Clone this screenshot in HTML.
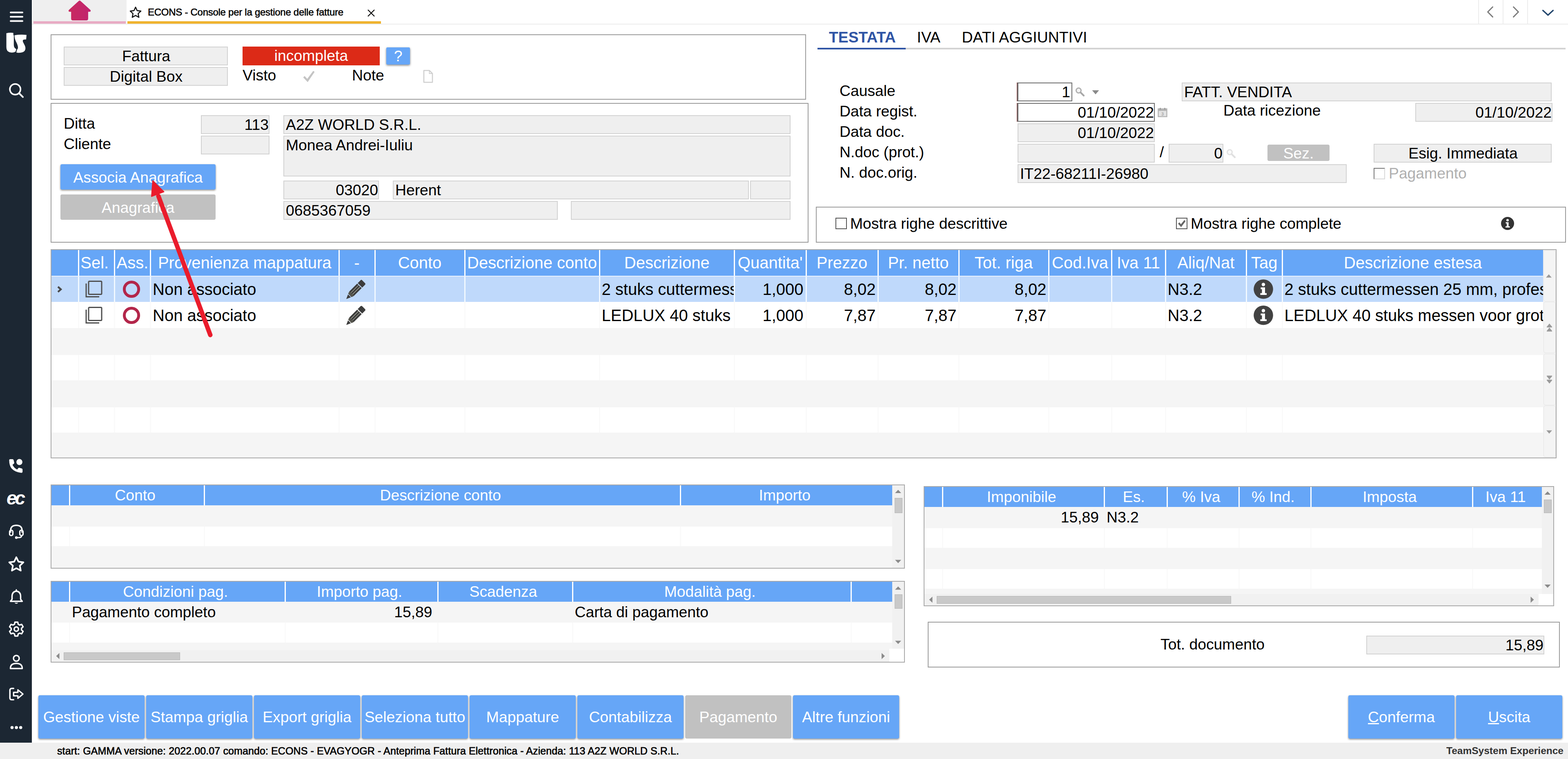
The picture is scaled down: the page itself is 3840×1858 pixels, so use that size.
<!DOCTYPE html>
<html lang="it"><head><meta charset="utf-8"><title>ECONS - Console per la gestione delle fatture</title>
<style>
*{box-sizing:border-box;margin:0;padding:0}
html,body{width:3840px;height:1858px;overflow:hidden;background:#fff}
body{font-family:"Liberation Sans",sans-serif;font-size:37.3px;color:#000;position:relative}
.a{position:absolute}
.t{position:absolute;white-space:nowrap;line-height:1}
.f{position:absolute;background:#efefef;border:2px solid #d2d2d2;white-space:nowrap;overflow:hidden;line-height:43px;height:45px;padding:0 4px}
.r{text-align:right;padding-right:0}.c{text-align:center;padding:0 3px 0 5px}
.p{position:absolute;border:2px solid #9b9b9b;background:#fff}
.b{position:absolute;background:#66a6f7;color:#fff;text-align:center;white-space:nowrap;box-shadow:0 2px 4px rgba(0,0,0,.45);border-radius:3px}
.g{position:absolute;background:#fff;overflow:hidden}
.gh{position:absolute;background:#66a6f7;color:#fff;text-align:center;white-space:nowrap;overflow:hidden}
.gc{position:absolute;white-space:nowrap;overflow:hidden}
.sb{position:absolute;background:#f1f1f1}
svg{position:absolute;overflow:visible}
</style></head>
<body>
<div class="a" style="left:78px;top:0px;width:3762px;height:60px;background:#fff;border-bottom:2px solid #ececec"></div>
<div class="a" style="left:80px;top:0px;width:230px;height:59px;background:#efefef"></div>
<div class="a" style="left:82px;top:52px;width:226px;height:6px;background:#e8abc4"></div>
<svg style="left:166px;top:0px" width="58" height="52" viewBox="0 0 58 52"><defs><linearGradient id="hg" x1="0" y1="0" x2="1" y2="0"><stop offset="0" stop-color="#c92a5f"/><stop offset="1" stop-color="#c0256f"/></linearGradient></defs><path d="M29 1.6 Q30.3 1.6 31.3 2.6 L55 24 Q57 26 55.8 27.8 Q55 28.8 53.5 28.8 L49.9 28.8 L49.9 45.5 Q49.9 50.1 45.3 50.1 L12.8 50.1 Q8.2 50.1 8.2 45.5 L8.2 28.8 L4.5 28.8 Q3 28.8 2.2 27.8 Q1 26 3 24 L26.7 2.6 Q27.7 1.6 29 1.6 Z" fill="url(#hg)"/></svg>
<div class="a" style="left:312px;top:52px;width:621px;height:6px;background:#efb32f"></div>
<svg style="left:316px;top:15px" width="32" height="30" viewBox="0 0 32 30"><path d="M16 2.6 L19.9 11 L29 12.1 L22.3 18.4 L24.1 27.4 L16 22.9 L7.9 27.4 L9.7 18.4 L3 12.1 L12.1 11 Z" fill="none" stroke="#111" stroke-width="2.6" stroke-linejoin="round"/></svg>
<div class="t" style="left:362px;top:18px;font-size:24px;letter-spacing:-0.27px;-webkit-text-stroke:0.6px #000">ECONS - Console per la gestione delle fatture</div>
<svg style="left:899px;top:23px" width="20" height="18" viewBox="0 0 20 18"><path d="M2 1 L18 17 M18 1 L2 17" stroke="#111" stroke-width="2.4" fill="none"/></svg>
<div class="a" style="left:3620px;top:0px;width:2px;height:58px;background:#ececec"></div>
<div class="a" style="left:3680px;top:0px;width:2px;height:58px;background:#ececec"></div>
<div class="a" style="left:3740px;top:0px;width:2px;height:58px;background:#ececec"></div>
<svg style="left:3636px;top:14px" width="24" height="32" viewBox="0 0 24 32"><path d="M19.5 3 L7.5 15.2 L19.5 27.4" stroke="#7d7d7d" stroke-width="3" stroke-linecap="round" stroke-linejoin="round" fill="none"/></svg>
<svg style="left:3700px;top:14px" width="24" height="32" viewBox="0 0 24 32"><path d="M6.5 3 L18.5 15.2 L6.5 27.4" stroke="#7d7d7d" stroke-width="3" stroke-linecap="round" stroke-linejoin="round" fill="none"/></svg>
<svg style="left:3775px;top:20.5px" width="32" height="20" viewBox="0 0 32 20"><path d="M3.5 4.5 L16 16 L28.5 4.5" stroke="#21456c" stroke-width="3.2" stroke-linecap="round" stroke-linejoin="round" fill="none"/></svg>
<div class="a" style="left:0px;top:1818px;width:3840px;height:40px;background:#efefef"></div>
<div class="t" style="left:140px;top:1826px;font-size:25px;letter-spacing:0.1px;-webkit-text-stroke:0.7px #000">start: GAMMA versione: 2022.00.07 comando: ECONS - EVAGYOGR - Anteprima Fattura Elettronica - Azienda: 113 A2Z WORLD S.R.L.</div>
<div class="t" style="right:11px;top:1826px;font-size:24.5px;font-weight:bold;color:#333">TeamSystem Experience</div>
<div class="a" style="left:0px;top:0px;width:78px;height:1818px;background:#1c2733"></div>
<svg style="left:24px;top:27px" width="33" height="28" viewBox="0 0 33 28"><path d="M2 3.5 H31 M2 14 H31 M2 24.5 H31" stroke="#fff" stroke-width="4" stroke-linecap="round"/></svg>
<svg style="left:14px;top:79px" width="52" height="52" viewBox="0 0 52 52"><path d="M1.6 2.2 Q10 0.4 18.6 1.4 L18.8 7.2 L19.9 7.4 L19.8 30 Q19.6 38.5 25.8 41.2 L24 47.4 Q17.5 51.2 9.6 49 Q1.6 46.4 1.6 36.5 Z" fill="#fff"/><path d="M21.6 7.2 Q36 4.8 51 6.4 L50 17.6 L45.6 17.8 Q40.6 18.2 42.2 23.4 L47 33 Q51 44 42.4 48.6 Q34.6 51.6 26 49.4 L27.6 42.6 Q30.2 40.4 30 36.2 Q29.2 30 25 22.4 Q21.4 14.6 21.6 7.2 Z" fill="#fff"/></svg>
<svg style="left:20px;top:202px" width="42" height="42" viewBox="0 0 42 42"><circle cx="17.2" cy="16.6" r="13" fill="none" stroke="#fff" stroke-width="3.8"/><path d="M26.5 26 L36 35.5" stroke="#fff" stroke-width="4" stroke-linecap="round"/></svg>
<svg style="left:20px;top:1121px" width="40" height="40" viewBox="0 0 40 40"><path d="M2.5 5.5 Q2.5 3 5 3 L10.5 3 Q12.8 3 13.3 5.2 L14.8 11.5 Q15.2 13.2 13.8 14.3 L10.6 16.8 Q14 24.5 22 28.4 L24.8 25 Q25.9 23.7 27.5 24.2 L33.2 25.8 Q35.2 26.4 35.2 28.5 L35.2 33.5 Q35.2 36.4 32.2 36.4 Q17.5 35.4 8.5 26 Q2.5 18.5 2.5 5.5 Z" fill="#fff"/><circle cx="27.5" cy="10" r="7.4" fill="#fff"/></svg>
<div class="t" style="left:16px;top:1196px;font-size:46px;font-weight:bold;font-style:italic;color:#fff;letter-spacing:-5px;font-family:'Liberation Sans',sans-serif">ec</div>
<svg style="left:20px;top:1282px" width="40" height="40" viewBox="0 0 40 40"><path d="M6 22 V17 Q6 4 20 4 Q34 4 34 17 V22" fill="none" stroke="#fff" stroke-width="3.4"/><rect x="3.5" y="16" width="8" height="13" rx="3.5" fill="none" stroke="#fff" stroke-width="3.2"/><rect x="28.5" y="16" width="8" height="13" rx="3.5" fill="none" stroke="#fff" stroke-width="3.2"/><path d="M33 29 Q33 34 26 34 H22" fill="none" stroke="#fff" stroke-width="3.2"/><circle cx="20" cy="34" r="3.2" fill="#fff"/></svg>
<svg style="left:19px;top:1360px" width="42" height="42" viewBox="0 0 42 42"><path d="M21 4 L26.3 15 L38.3 16.5 L29.5 24.9 L31.8 36.8 L21 31 L10.2 36.8 L12.5 24.9 L3.7 16.5 L15.7 15 Z" fill="none" stroke="#fff" stroke-width="4" stroke-linejoin="round"/></svg>
<svg style="left:21px;top:1441px" width="38" height="40" viewBox="0 0 38 40"><path d="M19 3 V6 M19 6 Q8.5 7.5 8.5 19 V26 L4.5 31 H33.5 L29.5 26 V19 Q29.5 7.5 19 6 Z" fill="none" stroke="#fff" stroke-width="3.4" stroke-linejoin="round" stroke-linecap="round"/><path d="M14.5 34.5 Q19 39.5 23.5 34.5 Z" fill="#fff"/></svg>
<svg style="left:19px;top:1519px" width="42" height="42" viewBox="0 0 42 42"><path d="M17.5 3 H24.5 L25.6 8.2 L29 10.1 L34 8.4 L37.5 14.4 L33.6 18 V22 L37.5 25.6 L34 31.6 L29 29.9 L25.6 31.8 L24.5 37 H17.5 L16.4 31.8 L13 29.9 L8 31.6 L4.5 25.6 L8.4 22 V18 L4.5 14.4 L8 8.4 L13 10.1 L16.4 8.2 Z" transform="translate(0 1)" fill="none" stroke="#fff" stroke-width="3.4" stroke-linejoin="round"/><circle cx="21" cy="21" r="5.2" fill="none" stroke="#fff" stroke-width="3.4"/></svg>
<svg style="left:21px;top:1600.5px" width="38" height="40" viewBox="0 0 38 40"><circle cx="19" cy="10.5" r="7" fill="none" stroke="#fff" stroke-width="3.4"/><path d="M4.5 35.5 Q4.5 23 19 23 Q33.5 23 33.5 35.5 Z" fill="none" stroke="#fff" stroke-width="3.4" stroke-linejoin="round"/></svg>
<svg style="left:20px;top:1681px" width="40" height="36.2" viewBox="0 0 42 38"><path d="M14 4.5 H9 Q4.5 4.5 4.5 9 V29 Q4.5 33.5 9 33.5 H14" fill="none" stroke="#fff" stroke-width="3.6" stroke-linecap="round"/><path d="M14 14.5 H25 V8 L38 19 L25 30 V23.5 H14 Z" fill="none" stroke="#fff" stroke-width="3.4" stroke-linejoin="round"/></svg>
<svg style="left:24px;top:1774.5px" width="34" height="12" viewBox="0 0 34 12"><circle cx="5.5" cy="6" r="3.8" fill="#fff"/><circle cx="16.1" cy="6" r="3.8" fill="#fff"/><circle cx="26.7" cy="6" r="3.8" fill="#fff"/></svg>
<div class="p" style="left:124px;top:84px;width:1850px;height:160px;"></div>
<div class="f c" style="left:156px;top:114px;width:402px;height:46px;">Fattura</div>
<div class="f c" style="left:156px;top:164px;width:402px;height:46px;">Digital Box</div>
<div class="a" style="left:594px;top:114px;width:336px;height:46px;background:#dc2a17;color:#fff;text-align:center;line-height:44px;white-space:nowrap">incompleta</div>
<div class="b" style="left:946px;top:116px;width:58px;height:42px;line-height:43px;font-size:37.3px;box-shadow:0 2px 5px rgba(0,0,0,.5)">?</div>
<div class="t" style="left:594px;top:166px;font-size:37.3px;">Visto</div>
<div class="t" style="left:862px;top:166px;font-size:37.3px;">Note</div>
<svg style="left:739px;top:170px" width="36" height="34" viewBox="0 0 36 34"><path d="M3.5 19.5 L7 16 L13.5 23 L28 3.5 L31.5 6 L14.5 31 Z" fill="#c4c4c4"/></svg>
<svg style="left:1035px;top:170px" width="28" height="34" viewBox="0 0 28 34"><path d="M3 2.5 H16.5 L24 10 V31.5 H3 Z" fill="#fff" stroke="#cfcfcf" stroke-width="2.6" stroke-linejoin="round"/><path d="M16.5 2.5 V10 H24" fill="none" stroke="#cfcfcf" stroke-width="2"/></svg>
<div class="p" style="left:124px;top:252px;width:1856px;height:342px;"></div>
<div class="t" style="left:156px;top:284px;font-size:37.3px;">Ditta</div>
<div class="t" style="left:156px;top:334px;font-size:37.3px;">Cliente</div>
<div class="f r" style="left:492px;top:282px;width:168px;height:46px;">113</div>
<div class="f " style="left:492px;top:332px;width:168px;height:46px;"></div>
<div class="f " style="left:694px;top:282px;width:1242px;height:46px;">A2Z WORLD S.R.L.</div>
<div class="f " style="left:694px;top:332px;width:1242px;height:100px;">Monea Andrei-Iuliu</div>
<div class="f r" style="left:694px;top:442px;width:234px;height:46px;">03020</div>
<div class="f " style="left:962px;top:442px;width:872px;height:46px;">Herent</div>
<div class="f " style="left:1837px;top:442px;width:99px;height:46px;"></div>
<div class="f " style="left:694px;top:492px;width:672px;height:46px;">0685367059</div>
<div class="f " style="left:1398px;top:492px;width:538px;height:46px;"></div>
<div class="b" style="left:148px;top:402px;width:380px;height:62px;line-height:64px;font-size:37.3px;border-radius:4px">Associa Anagrafica</div>
<div class="b" style="left:148px;top:476px;width:380px;height:62px;line-height:64px;font-size:37.3px;border-radius:4px;background:#c1c1c1;box-shadow:none">Anagrafica</div>
<div class="a" style="left:2218px;top:117px;width:1616px;height:4px;background:#d3d3d3"></div>
<div class="a" style="left:2002px;top:117px;width:216px;height:4px;background:#3055a5"></div>
<div class="t" style="left:2030px;top:73px;font-size:37.3px;font-weight:bold;color:#3055a5">TESTATA</div>
<div class="t" style="left:2245.5px;top:73px;font-size:37.4px;">IVA</div>
<div class="t" style="left:2355.5px;top:73px;font-size:37.4px;">DATI AGGIUNTIVI</div>
<div class="t" style="left:2056px;top:204px;font-size:37.3px;">Causale</div>
<div class="t" style="left:2056px;top:254px;font-size:37.3px;">Data regist.</div>
<div class="t" style="left:2056px;top:304px;font-size:37.3px;">Data doc.</div>
<div class="t" style="left:2056px;top:354px;font-size:37.3px;">N.doc (prot.)</div>
<div class="t" style="left:2056px;top:404px;font-size:37.3px;">N. doc.orig.</div>
<div class="f r" style="left:2491px;top:202px;width:135px;height:46px;background:#fff;border:2px solid #6b6b6b;border-left:3px solid #6b6b6b;box-shadow:-1px 0 0 #a04848;padding-right:3px">1</div>
<div class="f r" style="left:2491px;top:252px;width:337px;height:46px;background:#fff;border:2px solid #6b6b6b;border-left:3px solid #6b6b6b;box-shadow:-1px 0 0 #a04848;padding-right:0">01/10/2022</div>
<div class="f r" style="left:2492px;top:302px;width:336px;height:46px;">01/10/2022</div>
<div class="f " style="left:2492px;top:352px;width:336px;height:46px;"></div>
<div class="f " style="left:2492px;top:402px;width:806px;height:46px;">IT22-68211I-26980</div>
<div class="t" style="left:2840px;top:354px;font-size:37.3px;">/</div>
<div class="f r" style="left:2862px;top:352px;width:134px;height:46px;">0</div>
<div class="f " style="left:2894px;top:202px;width:906px;height:46px;">FATT. VENDITA</div>
<div class="t" style="left:2996px;top:252px;font-size:37.3px;">Data ricezione</div>
<div class="f r" style="left:3466px;top:252px;width:336px;height:46px;padding-right:0">01/10/2022</div>
<div class="b" style="left:3104px;top:354px;width:152px;height:40px;line-height:42px;font-size:37.3px;background:#c1c1c1;box-shadow:none;border-radius:4px">Sez.</div>
<div class="f c" style="left:3364px;top:352px;width:436px;height:46px;">Esig. Immediata</div>
<div class="a" style="left:3364px;top:411px;width:28px;height:28px;background:#fff;border:2px solid;border-color:#767676 #d8d8d8 #d8d8d8 #767676"></div>
<div class="t" style="left:3401px;top:406px;font-size:37.3px;color:#b0b0b0">Pagamento</div>
<svg style="left:2633px;top:213px;opacity:1" width="24" height="24" viewBox="0 0 24 24"><circle cx="8.5" cy="8.5" r="6" fill="#f4f4f4" stroke="#b0b0b0" stroke-width="3"/><path d="M13.5 13.5 L21 21" stroke="#a8a8a8" stroke-width="4.2" stroke-linecap="round"/></svg>
<svg style="left:3003px;top:364px;opacity:0.35" width="24" height="24" viewBox="0 0 24 24"><circle cx="8.5" cy="8.5" r="6" fill="#f4f4f4" stroke="#b0b0b0" stroke-width="3"/><path d="M13.5 13.5 L21 21" stroke="#a8a8a8" stroke-width="4.2" stroke-linecap="round"/></svg>
<svg style="left:2673px;top:219px" width="20" height="14" viewBox="0 0 20 14"><path d="M1.5 2 H18.5 L10 12 Z" fill="#8a8a8a"/></svg>
<svg style="left:2835px;top:263px" width="24" height="24" viewBox="0 0 24 24"><rect x="1.5" y="3.5" width="21" height="19" fill="#e4e4e4" stroke="#b4b4b4" stroke-width="2.4"/><rect x="1.5" y="3.5" width="21" height="5" fill="#b4b4b4"/><rect x="5" y="1" width="3" height="5" fill="#a0a0a0"/><rect x="16" y="1" width="3" height="5" fill="#a0a0a0"/><text x="12" y="20" font-family="Liberation Sans,sans-serif" font-size="11" font-weight="bold" text-anchor="middle" fill="#aaa">3</text></svg>
<div class="p" style="left:1998px;top:506px;width:1837px;height:88px;"></div>
<div class="a" style="left:2046px;top:533px;width:28px;height:28px;background:#fff;border:2px solid #555"></div>
<div class="t" style="left:2082px;top:529px;font-size:37.3px;">Mostra righe descrittive</div>
<div class="a" style="left:2880px;top:533px;width:28px;height:28px;background:#fff;border:2px solid #555"><svg style="left:1px;top:1px" width="22" height="22" viewBox="0 0 22 22"><path d="M2 11.5 L5.5 8.2 L9 13 L17.5 2.5 L20.5 5.5 L9.5 20 Z" fill="#666"/></svg></div>
<div class="t" style="left:2916px;top:529px;font-size:37.3px;">Mostra righe complete</div>
<svg style="left:3675px;top:530px" width="34" height="34" viewBox="0 0 34 34"><circle cx="17" cy="17" r="16" fill="#333"/><circle cx="17" cy="9" r="3" fill="#fff"/><path d="M12.5 14 H19.5 V24 H22.5 V27 H12 V24 H15 V17 H12.5 Z" fill="#fff"/></svg>
<div class="p" style="left:124px;top:610px;width:3688px;height:512px;border-color:#a9a9a9;background:#f5f5f5"></div>
<div class="a" style="left:126px;top:612px;width:3652.5px;height:62.5px;background:#fff"></div>
<div class="gh" style="left:126px;top:612px;width:64.5px;height:62.5px;font-size:40px;line-height:62.5px;"></div>
<div class="gh" style="left:193.5px;top:612px;width:85.5px;height:62.5px;font-size:40px;line-height:62.5px;padding-right:9.0px;">Sel.</div>
<div class="gh" style="left:282.0px;top:612px;width:85.0px;height:62.5px;font-size:40px;line-height:62.5px;">Ass.</div>
<div class="gh" style="left:370.0px;top:612px;width:458.5px;height:62.5px;font-size:40px;line-height:62.5px;">Provenienza mappatura</div>
<div class="gh" style="left:831.5px;top:612px;width:85.0px;height:62.5px;font-size:40px;line-height:62.5px;">-</div>
<div class="gh" style="left:919.5px;top:612px;width:217.0px;height:62.5px;font-size:40px;line-height:62.5px;">Conto</div>
<div class="gh" style="left:1139.5px;top:612px;width:327.0px;height:62.5px;font-size:40px;line-height:62.5px;">Descrizione conto</div>
<div class="gh" style="left:1469.5px;top:612px;width:327.5px;height:62.5px;font-size:40px;line-height:62.5px;">Descrizione</div>
<div class="gh" style="left:1800.0px;top:612px;width:172.5px;height:62.5px;font-size:40px;line-height:62.5px;">Quantita&#x27;</div>
<div class="gh" style="left:1975.5px;top:612px;width:173.0px;height:62.5px;font-size:40px;line-height:62.5px;">Prezzo</div>
<div class="gh" style="left:2151.5px;top:612px;width:195.0px;height:62.5px;font-size:40px;line-height:62.5px;">Pr. netto</div>
<div class="gh" style="left:2349.5px;top:612px;width:217.0px;height:62.5px;font-size:40px;line-height:62.5px;">Tot. riga</div>
<div class="gh" style="left:2569.5px;top:612px;width:151.0px;height:62.5px;font-size:40px;line-height:62.5px;">Cod.Iva</div>
<div class="gh" style="left:2723.5px;top:612px;width:129.0px;height:62.5px;font-size:40px;line-height:62.5px;">Iva 11</div>
<div class="gh" style="left:2855.5px;top:612px;width:195.5px;height:62.5px;font-size:40px;line-height:62.5px;">Aliq/Nat</div>
<div class="gh" style="left:3054.0px;top:612px;width:84.5px;height:62.5px;font-size:40px;line-height:62.5px;">Tag</div>
<div class="gh" style="left:3141.5px;top:612px;width:637.0px;height:62.5px;font-size:40px;line-height:62.5px;">Descrizione estesa</div>
<div class="a" style="left:126px;top:677px;width:3652.5px;height:61.5px;background:#f2f9ff"></div>
<div class="a" style="left:126px;top:677px;width:64.5px;height:61.5px;background:#bfd9fb"></div>
<div class="a" style="left:193.5px;top:677px;width:85.5px;height:61.5px;background:#bfd9fb"></div>
<div class="a" style="left:282.0px;top:677px;width:85.0px;height:61.5px;background:#bfd9fb"></div>
<div class="a" style="left:370.0px;top:677px;width:458.5px;height:61.5px;background:#bfd9fb"></div>
<div class="a" style="left:831.5px;top:677px;width:85.0px;height:61.5px;background:#bfd9fb"></div>
<div class="a" style="left:919.5px;top:677px;width:217.0px;height:61.5px;background:#bfd9fb"></div>
<div class="a" style="left:1139.5px;top:677px;width:327.0px;height:61.5px;background:#bfd9fb"></div>
<div class="a" style="left:1469.5px;top:677px;width:327.5px;height:61.5px;background:#bfd9fb"></div>
<div class="a" style="left:1800.0px;top:677px;width:172.5px;height:61.5px;background:#bfd9fb"></div>
<div class="a" style="left:1975.5px;top:677px;width:173.0px;height:61.5px;background:#bfd9fb"></div>
<div class="a" style="left:2151.5px;top:677px;width:195.0px;height:61.5px;background:#bfd9fb"></div>
<div class="a" style="left:2349.5px;top:677px;width:217.0px;height:61.5px;background:#bfd9fb"></div>
<div class="a" style="left:2569.5px;top:677px;width:151.0px;height:61.5px;background:#bfd9fb"></div>
<div class="a" style="left:2723.5px;top:677px;width:129.0px;height:61.5px;background:#bfd9fb"></div>
<div class="a" style="left:2855.5px;top:677px;width:195.5px;height:61.5px;background:#bfd9fb"></div>
<div class="a" style="left:3054.0px;top:677px;width:84.5px;height:61.5px;background:#bfd9fb"></div>
<div class="a" style="left:3141.5px;top:677px;width:637.0px;height:61.5px;background:#bfd9fb"></div>
<div class="a" style="left:126px;top:739px;width:3652.5px;height:63.5px;background:#fafafa"></div>
<div class="a" style="left:126px;top:739px;width:64.5px;height:63.5px;background:#fff"></div>
<div class="a" style="left:193.5px;top:739px;width:85.5px;height:63.5px;background:#fff"></div>
<div class="a" style="left:282.0px;top:739px;width:85.0px;height:63.5px;background:#fff"></div>
<div class="a" style="left:370.0px;top:739px;width:458.5px;height:63.5px;background:#fff"></div>
<div class="a" style="left:831.5px;top:739px;width:85.0px;height:63.5px;background:#fff"></div>
<div class="a" style="left:919.5px;top:739px;width:217.0px;height:63.5px;background:#fff"></div>
<div class="a" style="left:1139.5px;top:739px;width:327.0px;height:63.5px;background:#fff"></div>
<div class="a" style="left:1469.5px;top:739px;width:327.5px;height:63.5px;background:#fff"></div>
<div class="a" style="left:1800.0px;top:739px;width:172.5px;height:63.5px;background:#fff"></div>
<div class="a" style="left:1975.5px;top:739px;width:173.0px;height:63.5px;background:#fff"></div>
<div class="a" style="left:2151.5px;top:739px;width:195.0px;height:63.5px;background:#fff"></div>
<div class="a" style="left:2349.5px;top:739px;width:217.0px;height:63.5px;background:#fff"></div>
<div class="a" style="left:2569.5px;top:739px;width:151.0px;height:63.5px;background:#fff"></div>
<div class="a" style="left:2723.5px;top:739px;width:129.0px;height:63.5px;background:#fff"></div>
<div class="a" style="left:2855.5px;top:739px;width:195.5px;height:63.5px;background:#fff"></div>
<div class="a" style="left:3054.0px;top:739px;width:84.5px;height:63.5px;background:#fff"></div>
<div class="a" style="left:3141.5px;top:739px;width:637.0px;height:63.5px;background:#fff"></div>
<div class="a" style="left:126px;top:868.5px;width:3652.5px;height:62.0px;background:#fafafa"></div>
<div class="a" style="left:126px;top:868.5px;width:64.5px;height:62.0px;background:#fff"></div>
<div class="a" style="left:193.5px;top:868.5px;width:85.5px;height:62.0px;background:#fff"></div>
<div class="a" style="left:282.0px;top:868.5px;width:85.0px;height:62.0px;background:#fff"></div>
<div class="a" style="left:370.0px;top:868.5px;width:458.5px;height:62.0px;background:#fff"></div>
<div class="a" style="left:831.5px;top:868.5px;width:85.0px;height:62.0px;background:#fff"></div>
<div class="a" style="left:919.5px;top:868.5px;width:217.0px;height:62.0px;background:#fff"></div>
<div class="a" style="left:1139.5px;top:868.5px;width:327.0px;height:62.0px;background:#fff"></div>
<div class="a" style="left:1469.5px;top:868.5px;width:327.5px;height:62.0px;background:#fff"></div>
<div class="a" style="left:1800.0px;top:868.5px;width:172.5px;height:62.0px;background:#fff"></div>
<div class="a" style="left:1975.5px;top:868.5px;width:173.0px;height:62.0px;background:#fff"></div>
<div class="a" style="left:2151.5px;top:868.5px;width:195.0px;height:62.0px;background:#fff"></div>
<div class="a" style="left:2349.5px;top:868.5px;width:217.0px;height:62.0px;background:#fff"></div>
<div class="a" style="left:2569.5px;top:868.5px;width:151.0px;height:62.0px;background:#fff"></div>
<div class="a" style="left:2723.5px;top:868.5px;width:129.0px;height:62.0px;background:#fff"></div>
<div class="a" style="left:2855.5px;top:868.5px;width:195.5px;height:62.0px;background:#fff"></div>
<div class="a" style="left:3054.0px;top:868.5px;width:84.5px;height:62.0px;background:#fff"></div>
<div class="a" style="left:3141.5px;top:868.5px;width:637.0px;height:62.0px;background:#fff"></div>
<div class="a" style="left:126px;top:997px;width:3652.5px;height:61.5px;background:#fafafa"></div>
<div class="a" style="left:126px;top:997px;width:64.5px;height:61.5px;background:#fff"></div>
<div class="a" style="left:193.5px;top:997px;width:85.5px;height:61.5px;background:#fff"></div>
<div class="a" style="left:282.0px;top:997px;width:85.0px;height:61.5px;background:#fff"></div>
<div class="a" style="left:370.0px;top:997px;width:458.5px;height:61.5px;background:#fff"></div>
<div class="a" style="left:831.5px;top:997px;width:85.0px;height:61.5px;background:#fff"></div>
<div class="a" style="left:919.5px;top:997px;width:217.0px;height:61.5px;background:#fff"></div>
<div class="a" style="left:1139.5px;top:997px;width:327.0px;height:61.5px;background:#fff"></div>
<div class="a" style="left:1469.5px;top:997px;width:327.5px;height:61.5px;background:#fff"></div>
<div class="a" style="left:1800.0px;top:997px;width:172.5px;height:61.5px;background:#fff"></div>
<div class="a" style="left:1975.5px;top:997px;width:173.0px;height:61.5px;background:#fff"></div>
<div class="a" style="left:2151.5px;top:997px;width:195.0px;height:61.5px;background:#fff"></div>
<div class="a" style="left:2349.5px;top:997px;width:217.0px;height:61.5px;background:#fff"></div>
<div class="a" style="left:2569.5px;top:997px;width:151.0px;height:61.5px;background:#fff"></div>
<div class="a" style="left:2723.5px;top:997px;width:129.0px;height:61.5px;background:#fff"></div>
<div class="a" style="left:2855.5px;top:997px;width:195.5px;height:61.5px;background:#fff"></div>
<div class="a" style="left:3054.0px;top:997px;width:84.5px;height:61.5px;background:#fff"></div>
<div class="a" style="left:3141.5px;top:997px;width:637.0px;height:61.5px;background:#fff"></div>
<div class="a" style="left:126px;top:674.5px;width:3653px;height:2.5px;background:#eaf2fe"></div>
<div class="gc" style="left:370.0px;top:682px;width:458.5px;height:52px;padding:6px 0 0 4px;line-height:1;font-size:40px">Non associato</div>
<div class="gc" style="left:1469.5px;top:682px;width:327.5px;height:52px;padding:6px 0 0 4px;line-height:1;font-size:40px">2 stuks cuttermessen 25 mm, professionele</div>
<div class="gc" style="left:1800.0px;top:682px;width:172.5px;height:52px;padding:6px 5px 0 0;line-height:1;font-size:40px;text-align:right">1,000</div>
<div class="gc" style="left:1975.5px;top:682px;width:173.0px;height:52px;padding:6px 4px 0 0;line-height:1;font-size:40px;text-align:right">8,02</div>
<div class="gc" style="left:2151.5px;top:682px;width:195.0px;height:52px;padding:6px 4px 0 0;line-height:1;font-size:40px;text-align:right">8,02</div>
<div class="gc" style="left:2349.5px;top:682px;width:217.0px;height:52px;padding:6px 4px 0 0;line-height:1;font-size:40px;text-align:right">8,02</div>
<div class="gc" style="left:2855.5px;top:682px;width:195.5px;height:52px;padding:6px 0 0 4px;line-height:1;font-size:40px">N3.2</div>
<div class="gc" style="left:3141.5px;top:682px;width:637.0px;height:52px;padding:6px 0 0 4px;line-height:1;font-size:40px">2 stuks cuttermessen 25 mm, professionele</div>
<div class="gc" style="left:370.0px;top:746px;width:458.5px;height:52px;padding:6px 0 0 4px;line-height:1;font-size:40px">Non associato</div>
<div class="gc" style="left:1469.5px;top:746px;width:327.5px;height:52px;padding:6px 0 0 4px;line-height:1;font-size:40px">LEDLUX 40 stuks messen voor grote</div>
<div class="gc" style="left:1800.0px;top:746px;width:172.5px;height:52px;padding:6px 5px 0 0;line-height:1;font-size:40px;text-align:right">1,000</div>
<div class="gc" style="left:1975.5px;top:746px;width:173.0px;height:52px;padding:6px 4px 0 0;line-height:1;font-size:40px;text-align:right">7,87</div>
<div class="gc" style="left:2151.5px;top:746px;width:195.0px;height:52px;padding:6px 4px 0 0;line-height:1;font-size:40px;text-align:right">7,87</div>
<div class="gc" style="left:2349.5px;top:746px;width:217.0px;height:52px;padding:6px 4px 0 0;line-height:1;font-size:40px;text-align:right">7,87</div>
<div class="gc" style="left:2855.5px;top:746px;width:195.5px;height:52px;padding:6px 0 0 4px;line-height:1;font-size:40px">N3.2</div>
<div class="gc" style="left:3141.5px;top:746px;width:637.0px;height:52px;padding:6px 0 0 4px;line-height:1;font-size:40px">LEDLUX 40 stuks messen voor grote cutter</div>
<svg style="left:138px;top:698px" width="16" height="20" viewBox="0 0 16 20"><path d="M4 4 L11 10.3 L4 16.6" fill="none" stroke="#4a4a4a" stroke-width="4.4"/></svg>
<svg style="left:208px;top:686px" width="44" height="44" viewBox="0 0 44 44"><path d="M3 8 V40.5 H35" fill="none" stroke="#4f4f4f" stroke-width="3"/><rect x="9" y="2.5" width="32" height="32" rx="2" fill="none" stroke="#4f4f4f" stroke-width="3"/></svg>
<svg style="left:300px;top:686px" width="44" height="44" viewBox="0 0 44 44"><circle cx="22" cy="22" r="17.6" fill="none" stroke="#b3264a" stroke-width="7"/></svg>
<svg style="left:0;top:0" width="3840" height="1858" viewBox="0 0 3840 1858"><g transform="translate(848 732) rotate(-45)" fill="#3c3c3c"><path d="M0 0 L11 -5 V5 Z"/><path d="M12.6 -5.8 L19 -7.8 H45.5 V7.8 H19 L12.6 5.8 Z"/><path d="M19 -2.7 H45.5 M19 2.7 H45.5" stroke="#b9baa8" stroke-width="1.2" fill="none"/><path d="M12.6 -5.8 L19 -7.8 V7.8 L12.6 5.8 Z" fill="#55554d"/><path d="M47.4 -7.8 H57 Q60 -7.8 60 -4.8 V4.8 Q60 7.8 57 7.8 H47.4 Z"/></g></svg>
<svg style="left:3070px;top:684px" width="48" height="48" viewBox="0 0 48 48"><circle cx="24" cy="23.8" r="23.8" fill="#424242"/><circle cx="24" cy="12.5" r="4.2" fill="#fff"/><path d="M17.5 19.5 H28 V33.5 H32 V38 H16.5 V33.5 H20.5 V24 H17.5 Z" fill="#fff"/></svg>
<svg style="left:208px;top:749.6px" width="44" height="44" viewBox="0 0 44 44"><path d="M3 8 V40.5 H35" fill="none" stroke="#4f4f4f" stroke-width="3"/><rect x="9" y="2.5" width="32" height="32" rx="2" fill="none" stroke="#4f4f4f" stroke-width="3"/></svg>
<svg style="left:300px;top:749.6px" width="44" height="44" viewBox="0 0 44 44"><circle cx="22" cy="22" r="17.6" fill="none" stroke="#b3264a" stroke-width="7"/></svg>
<svg style="left:0;top:0" width="3840" height="1858" viewBox="0 0 3840 1858"><g transform="translate(848 795.6) rotate(-45)" fill="#3c3c3c"><path d="M0 0 L11 -5 V5 Z"/><path d="M12.6 -5.8 L19 -7.8 H45.5 V7.8 H19 L12.6 5.8 Z"/><path d="M19 -2.7 H45.5 M19 2.7 H45.5" stroke="#b9baa8" stroke-width="1.2" fill="none"/><path d="M12.6 -5.8 L19 -7.8 V7.8 L12.6 5.8 Z" fill="#55554d"/><path d="M47.4 -7.8 H57 Q60 -7.8 60 -4.8 V4.8 Q60 7.8 57 7.8 H47.4 Z"/></g></svg>
<svg style="left:3070px;top:747.6px" width="48" height="48" viewBox="0 0 48 48"><circle cx="24" cy="23.8" r="23.8" fill="#424242"/><circle cx="24" cy="12.5" r="4.2" fill="#fff"/><path d="M17.5 19.5 H28 V33.5 H32 V38 H16.5 V33.5 H20.5 V24 H17.5 Z" fill="#fff"/></svg>
<div class="a" style="left:3779px;top:612px;width:31px;height:508px;background:#f3f3f3"></div>
<div class="a" style="left:3780px;top:613px;width:30px;height:125px;background:#f4f4f4;border:1px solid #e6e6e6;border-radius:5px"></div>
<div class="a" style="left:3780px;top:739px;width:30px;height:125px;background:#f4f4f4;border:1px solid #e6e6e6;border-radius:5px"></div>
<div class="a" style="left:3780px;top:866px;width:30px;height:126px;background:#f4f4f4;border:1px solid #e6e6e6;border-radius:5px"></div>
<div class="a" style="left:3780px;top:993px;width:30px;height:126px;background:#f4f4f4;border:1px solid #e6e6e6;border-radius:5px"></div>
<svg style="left:0;top:0" width="3840" height="1858" viewBox="0 0 3840 1858"><path d="M3786.0 679.5 L3793 671.5 L3800.0 679.5 Z" fill="#9a9a9a"/><path d="M3788.0 800.0 L3794.5 792.0 L3801.0 800.0 Z" fill="#9a9a9a"/><path d="M3788.0 810.0 L3794.5 802.0 L3801.0 810.0 Z" fill="#9a9a9a"/><path d="M3788 800.5 H3801 M3788 810.5 H3801" stroke="#9a9a9a" stroke-width="2"/><path d="M3788.0 921.0 L3794.5 929.0 L3801.0 921.0 Z" fill="#9a9a9a"/><path d="M3788.0 931.0 L3794.5 939.0 L3801.0 931.0 Z" fill="#9a9a9a"/><path d="M3788 920.5 H3801 M3788 930.5 H3801" stroke="#9a9a9a" stroke-width="2"/><path d="M3787.0 1053.5 L3794 1061.5 L3801.0 1053.5 Z" fill="#9a9a9a"/></svg>
<div class="p" style="left:124px;top:1186px;width:2092px;height:206px;border-color:#a9a9a9;background:#f5f5f5"></div>
<div class="a" style="left:126px;top:1188px;width:2059px;height:49px;background:#fff"></div>
<div class="gh" style="left:126px;top:1188px;width:43.0px;height:49px;font-size:37.3px;line-height:49px;padding-right:9.0px;"></div>
<div class="gh" style="left:172.0px;top:1188px;width:327.0px;height:49px;font-size:37.3px;line-height:49px;padding-right:9.0px;">Conto</div>
<div class="gh" style="left:502.0px;top:1188px;width:1162.5px;height:49px;font-size:37.3px;line-height:49px;padding-right:9.0px;">Descrizione conto</div>
<div class="gh" style="left:1667.5px;top:1188px;width:517.5px;height:49px;font-size:37.3px;line-height:49px;padding-right:9.0px;">Importo</div>
<div class="a" style="left:126px;top:1288.5px;width:2059px;height:48.5px;background:#fafafa"></div>
<div class="a" style="left:126px;top:1288.5px;width:43.0px;height:48.5px;background:#fff"></div>
<div class="a" style="left:172.0px;top:1288.5px;width:327.0px;height:48.5px;background:#fff"></div>
<div class="a" style="left:502.0px;top:1288.5px;width:1162.5px;height:48.5px;background:#fff"></div>
<div class="a" style="left:1667.5px;top:1288.5px;width:517.5px;height:48.5px;background:#fff"></div>
<div class="a" style="left:2185px;top:1188px;width:29px;height:202px;background:#f1f1f1"></div>
<div class="a" style="left:2190.5px;top:1218.5px;width:19px;height:37px;background:#c9c9c9;border:1px solid #b4b4b4"></div>
<div class="p" style="left:124px;top:1422px;width:2092px;height:200px;border-color:#a9a9a9;background:#f5f5f5"></div>
<div class="a" style="left:126px;top:1424px;width:2059px;height:49px;background:#fff"></div>
<div class="gh" style="left:126px;top:1424px;width:43.0px;height:49px;font-size:37.3px;line-height:49px;padding-right:9.0px;"></div>
<div class="gh" style="left:172.0px;top:1424px;width:524.5px;height:49px;font-size:37.3px;line-height:49px;padding-right:9.0px;">Condizioni pag.</div>
<div class="gh" style="left:699.5px;top:1424px;width:371.0px;height:49px;font-size:37.3px;line-height:49px;padding-right:9.0px;">Importo pag.</div>
<div class="gh" style="left:1073.5px;top:1424px;width:327.0px;height:49px;font-size:37.3px;line-height:49px;padding-right:9.0px;">Scadenza</div>
<div class="gh" style="left:1403.5px;top:1424px;width:679.5px;height:49px;font-size:37.3px;line-height:49px;padding-right:9.0px;">Modalità pag.</div>
<div class="gh" style="left:2086.0px;top:1424px;width:99.0px;height:49px;font-size:37.3px;line-height:49px;padding-right:9.0px;"></div>
<div class="a" style="left:126px;top:1524px;width:2059px;height:49px;background:#fafafa"></div>
<div class="a" style="left:126px;top:1524px;width:43.0px;height:49px;background:#fff"></div>
<div class="a" style="left:172.0px;top:1524px;width:524.5px;height:49px;background:#fff"></div>
<div class="a" style="left:699.5px;top:1524px;width:371.0px;height:49px;background:#fff"></div>
<div class="a" style="left:1073.5px;top:1524px;width:327.0px;height:49px;background:#fff"></div>
<div class="a" style="left:1403.5px;top:1524px;width:679.5px;height:49px;background:#fff"></div>
<div class="a" style="left:2086.0px;top:1524px;width:99.0px;height:49px;background:#fff"></div>
<div class="gc" style="left:172.0px;top:1474px;width:524.5px;height:49.3px;padding:6px 0 0 4px;line-height:1;font-size:37.3px">Pagamento completo</div>
<div class="gc" style="left:699.5px;top:1474px;width:371.0px;height:49.3px;padding:6px 12px 0 0;line-height:1;font-size:37.3px;text-align:right">15,89</div>
<div class="gc" style="left:1403.5px;top:1474px;width:679.5px;height:49.3px;padding:6px 0 0 4px;line-height:1;font-size:37.3px">Carta di pagamento</div>
<div class="a" style="left:2185px;top:1424px;width:29px;height:164px;background:#f1f1f1"></div>
<div class="a" style="left:2190.5px;top:1455px;width:19px;height:35px;background:#c9c9c9;border:1px solid #b4b4b4"></div>
<div class="a" style="left:126px;top:1591.5px;width:2052px;height:28.5px;background:#f1f1f1"></div>
<div class="a" style="left:2178px;top:1588px;width:36px;height:32px;background:#fff"></div>
<div class="a" style="left:156px;top:1596.5px;width:285px;height:19px;background:#c9c9c9;border:1px solid #b4b4b4"></div>
<div class="p" style="left:2262px;top:1190px;width:1544px;height:294px;border-color:#a9a9a9;background:#f5f5f5"></div>
<div class="a" style="left:2264px;top:1192px;width:1512px;height:49px;background:#fff"></div>
<div class="gh" style="left:2264px;top:1192px;width:42.5px;height:49px;font-size:37.3px;line-height:49px;padding-right:9.0px;"></div>
<div class="gh" style="left:2309.5px;top:1192px;width:393.5px;height:49px;font-size:37.3px;line-height:49px;padding-right:9.0px;">Imponibile</div>
<div class="gh" style="left:2706.0px;top:1192px;width:150.5px;height:49px;font-size:37.3px;line-height:49px;padding-right:9.0px;">Es.</div>
<div class="gh" style="left:2859.5px;top:1192px;width:173.5px;height:49px;font-size:37.3px;line-height:49px;padding-right:9.0px;">% Iva</div>
<div class="gh" style="left:3036.0px;top:1192px;width:172.5px;height:49px;font-size:37.3px;line-height:49px;padding-right:9.0px;">% Ind.</div>
<div class="gh" style="left:3211.5px;top:1192px;width:393.0px;height:49px;font-size:37.3px;line-height:49px;padding-right:9.0px;">Imposta</div>
<div class="gh" style="left:3607.5px;top:1192px;width:168.5px;height:49px;font-size:37.3px;line-height:49px;padding-right:9.0px;">Iva 11</div>
<div class="a" style="left:2264px;top:1293px;width:1512px;height:47.5px;background:#fafafa"></div>
<div class="a" style="left:2264px;top:1293px;width:42.5px;height:47.5px;background:#fff"></div>
<div class="a" style="left:2309.5px;top:1293px;width:393.5px;height:47.5px;background:#fff"></div>
<div class="a" style="left:2706.0px;top:1293px;width:150.5px;height:47.5px;background:#fff"></div>
<div class="a" style="left:2859.5px;top:1293px;width:173.5px;height:47.5px;background:#fff"></div>
<div class="a" style="left:3036.0px;top:1293px;width:172.5px;height:47.5px;background:#fff"></div>
<div class="a" style="left:3211.5px;top:1293px;width:393.0px;height:47.5px;background:#fff"></div>
<div class="a" style="left:3607.5px;top:1293px;width:168.5px;height:47.5px;background:#fff"></div>
<div class="a" style="left:2264px;top:1393px;width:1512px;height:48px;background:#fafafa"></div>
<div class="a" style="left:2264px;top:1393px;width:42.5px;height:48px;background:#fff"></div>
<div class="a" style="left:2309.5px;top:1393px;width:393.5px;height:48px;background:#fff"></div>
<div class="a" style="left:2706.0px;top:1393px;width:150.5px;height:48px;background:#fff"></div>
<div class="a" style="left:2859.5px;top:1393px;width:173.5px;height:48px;background:#fff"></div>
<div class="a" style="left:3036.0px;top:1393px;width:172.5px;height:48px;background:#fff"></div>
<div class="a" style="left:3211.5px;top:1393px;width:393.0px;height:48px;background:#fff"></div>
<div class="a" style="left:3607.5px;top:1393px;width:168.5px;height:48px;background:#fff"></div>
<div class="gc" style="left:2309.5px;top:1242px;width:393.5px;height:49.3px;padding:6px 12px 0 0;line-height:1;font-size:37.3px;text-align:right">15,89</div>
<div class="gc" style="left:2706.0px;top:1242px;width:150.5px;height:49.3px;padding:6px 0 0 4px;line-height:1;font-size:37.3px">N3.2</div>
<div class="a" style="left:3776px;top:1192px;width:28px;height:262px;background:#f1f1f1"></div>
<div class="a" style="left:3780.5px;top:1222.5px;width:19px;height:33px;background:#c9c9c9;border:1px solid #b4b4b4"></div>
<div class="a" style="left:2264px;top:1454px;width:1504px;height:28px;background:#f1f1f1"></div>
<div class="a" style="left:3768px;top:1454px;width:36px;height:28px;background:#fff"></div>
<div class="a" style="left:2294px;top:1458.5px;width:721px;height:19px;background:#c9c9c9;border:1px solid #b4b4b4"></div>
<svg style="left:0;top:0" width="3840" height="1858" viewBox="0 0 3840 1858"><path d="M2192.0 1207.0 L2199.5 1199.0 L2207.0 1207.0 Z" fill="#8a8a8a"/><path d="M2192.0 1370.5 L2199.5 1378.5 L2207.0 1370.5 Z" fill="#8a8a8a"/><path d="M2192.0 1443.5 L2199.5 1435.5 L2207.0 1443.5 Z" fill="#8a8a8a"/><path d="M2192.0 1568.5 L2199.5 1576.5 L2207.0 1568.5 Z" fill="#8a8a8a"/><path d="M145.5 1598.5 L137.5 1606 L145.5 1613.5 Z" fill="#8a8a8a"/><path d="M2159.0 1598.5 L2167.0 1606 L2159.0 1613.5 Z" fill="#8a8a8a"/><path d="M3782.5 1211.0 L3790 1203.0 L3797.5 1211.0 Z" fill="#8a8a8a"/><path d="M3782.5 1431.0 L3790 1439.0 L3797.5 1431.0 Z" fill="#8a8a8a"/><path d="M2283.5 1460.5 L2275.5 1468 L2283.5 1475.5 Z" fill="#8a8a8a"/><path d="M3748.5 1460.5 L3756.5 1468 L3748.5 1475.5 Z" fill="#8a8a8a"/></svg>
<div class="p" style="left:2272px;top:1522px;width:1548px;height:112px;"></div>
<div class="t" style="left:2842px;top:1559px;font-size:37.3px;">Tot. documento</div>
<div class="f r" style="left:3346px;top:1556px;width:436px;height:46px;padding-right:0">15,89</div>
<div class="b" style="left:94px;top:1702px;width:260px;height:106px;line-height:106px;font-size:37.3px;border-radius:4px">Gestione viste</div>
<div class="b" style="left:358px;top:1702px;width:260px;height:106px;line-height:106px;font-size:37.3px;border-radius:4px">Stampa griglia</div>
<div class="b" style="left:622px;top:1702px;width:260px;height:106px;line-height:106px;font-size:37.3px;border-radius:4px">Export griglia</div>
<div class="b" style="left:886px;top:1702px;width:260px;height:106px;line-height:106px;font-size:37.3px;border-radius:4px">Seleziona tutto</div>
<div class="b" style="left:1150px;top:1702px;width:260px;height:106px;line-height:106px;font-size:37.3px;border-radius:4px">Mappature</div>
<div class="b" style="left:1414px;top:1702px;width:260px;height:106px;line-height:106px;font-size:37.3px;border-radius:4px">Contabilizza</div>
<div class="b" style="left:1678px;top:1702px;width:260px;height:106px;line-height:106px;font-size:37.3px;border-radius:4px;background:#c1c1c1;box-shadow:none">Pagamento</div>
<div class="b" style="left:1942px;top:1702px;width:260px;height:106px;line-height:106px;font-size:37.3px;border-radius:4px">Altre funzioni</div>
<div class="b" style="left:3302px;top:1702px;width:260px;height:106px;line-height:106px;font-size:37.3px;border-radius:4px"><u>C</u>onferma</div>
<div class="b" style="left:3566px;top:1702px;width:260px;height:106px;line-height:106px;font-size:37.3px;border-radius:4px"><u>U</u>scita</div>
<svg style="left:0;top:0" width="3840" height="1858" viewBox="0 0 3840 1858"><path d="M515 820 L388 480" stroke="#ea1c2c" stroke-width="11" stroke-linecap="round" fill="none"/><path d="M374 442 L401.5 469.5 L371 481 Z" fill="#ea1c2c" stroke="#ea1c2c" stroke-width="2" stroke-linejoin="round"/></svg>
</body></html>
